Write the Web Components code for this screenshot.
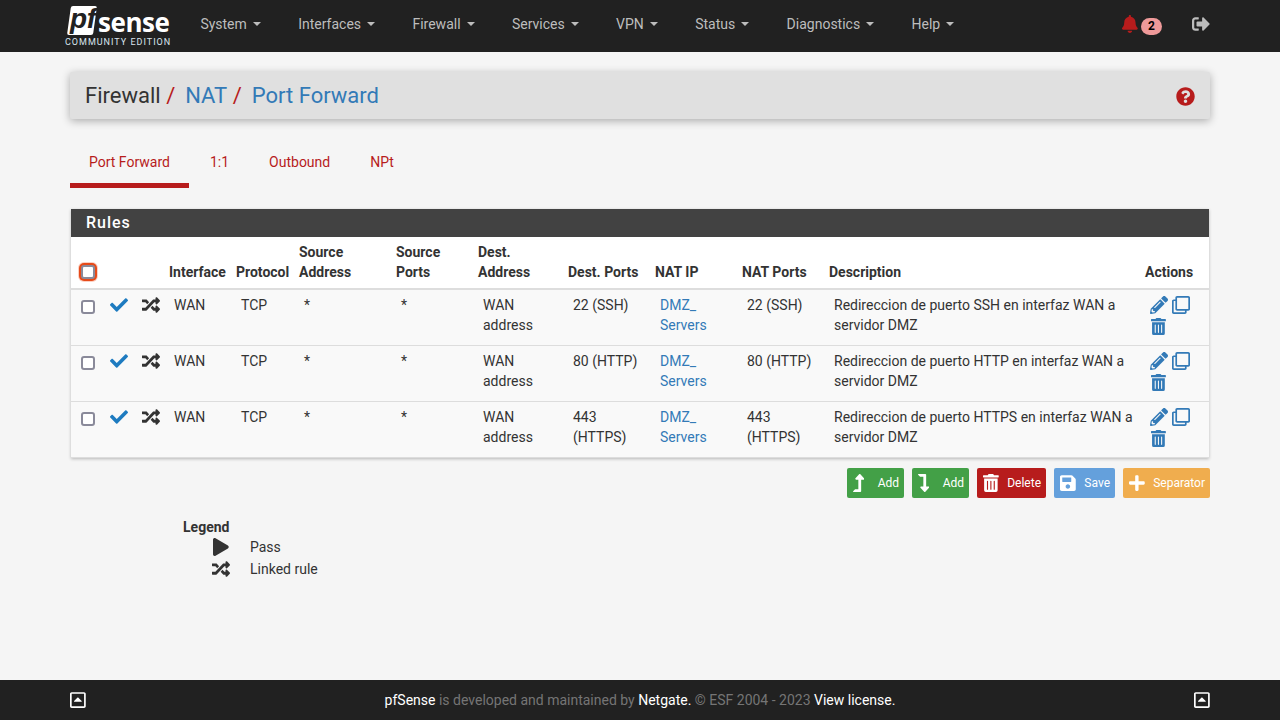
<!DOCTYPE html>
<html>
<head>
<meta charset="utf-8">
<title>Firewall / NAT / Port Forward</title>
<style>
html, body { margin: 0; height: 100%; }
body { background: #f5f5f5; font: 14px/20px Roboto, "Liberation Sans", sans-serif; color: #333; }
#page { height: 720px; display: flex; flex-direction: column; overflow: hidden; }
pf-main { flex: 1; }
</style>
</head>
<body>
<div id="page">
  <pf-navbar></pf-navbar>
  <pf-main>
    <pf-breadcrumb></pf-breadcrumb>
    <pf-tabs></pf-tabs>
    <pf-rules>
      <pf-rule desc="Redireccion de puerto SSH en interfaz WAN a servidor DMZ" port="22 (SSH)"></pf-rule>
      <pf-rule desc="Redireccion de puerto HTTP en interfaz WAN a servidor DMZ" port="80 (HTTP)"></pf-rule>
      <pf-rule desc="Redireccion de puerto HTTPS en interfaz WAN a servidor DMZ" port="443 (HTTPS)"></pf-rule>
    </pf-rules>
    <pf-actions></pf-actions>
    <pf-legend></pf-legend>
  </pf-main>
  <pf-footer></pf-footer>
</div>

<script>
// icon shapes, all on font-awesome style view boxes
const ICONS = {
  bell: [448, 'M224 512c35.32 0 63.97-28.65 63.97-64H160.03c0 35.35 28.65 64 63.97 64zm215.39-149.71c-19.32-20.76-55.47-51.99-55.47-154.29 0-77.7-54.48-139.9-127.94-155.16V32c0-17.67-14.32-32-31.98-32s-31.98 14.33-31.98 32v20.84C118.56 68.1 64.08 130.3 64.08 208c0 102.3-36.15 133.53-55.47 154.29-6 6.45-8.66 14.16-8.61 21.71.11 16.4 12.98 32 32.1 32h383.8c19.12 0 32-15.6 32.1-32 .05-7.55-2.61-15.27-8.61-21.71z'],
  signout: [512, 'M497 273L329 441c-15 15-41 4.5-41-17v-96H152c-13.3 0-24-10.7-24-24v-96c0-13.3 10.7-24 24-24h136V88c0-21.4 25.9-32 41-17l168 168c9.3 9.4 9.3 24.6 0 34zM192 436v-40c0-6.6-5.4-12-12-12H96c-17.7 0-32-14.3-32-32V160c0-17.7 14.3-32 32-32h84c6.6 0 12-5.4 12-12V76c0-6.6-5.4-12-12-12H96c-53 0-96 43-96 96v192c0 53 43 96 96 96h84c6.6 0 12-5.4 12-12z'],
  question: [512, 'M504 256c0 136.997-111.043 248-248 248S8 392.997 8 256C8 119.083 119.043 8 256 8s248 111.083 248 248zM262.655 90c-54.497 0-89.255 22.957-116.549 63.758-3.536 5.286-2.353 12.415 2.715 16.258l34.699 26.31c5.205 3.947 12.621 3.008 16.665-2.122 17.864-22.658 30.113-35.797 57.303-35.797 20.429 0 45.698 13.148 45.698 32.958 0 14.976-12.363 22.667-32.534 33.976C247.128 238.528 216 254.941 216 296v4c0 6.627 5.373 12 12 12h56c6.627 0 12-5.373 12-12v-1.333c0-28.462 83.186-29.647 83.186-106.667 0-58.002-60.165-102-116.531-102zM256 338c-25.365 0-46 20.635-46 46 0 25.364 20.635 46 46 46s46-20.636 46-46c0-25.365-20.635-46-46-46z'],
  check: [512, 'M173.898 439.404l-166.4-166.4c-9.997-9.997-9.997-26.206 0-36.204l36.203-36.204c9.997-9.998 26.207-9.998 36.204 0L192 312.69 432.095 72.596c9.997-9.997 26.207-9.997 36.204 0l36.203 36.204c9.997 9.997 9.997 26.206 0 36.204l-294.4 294.401c-9.998 9.997-26.207 9.997-36.204-.001z'],
  random: [512, 'M504.971 359.029c9.373 9.373 9.373 24.569 0 33.941l-80 79.984c-15.01 15.01-40.971 4.49-40.971-16.971V416h-58.785a12.004 12.004 0 0 1-8.773-3.812l-70.556-75.596 53.333-57.143L352 336h32v-39.981c0-21.438 25.943-31.998 40.971-16.971l80 79.981zM12 176h84l52.781 56.551 53.333-57.143-70.556-75.596A11.999 11.999 0 0 0 122.785 96H12c-6.627 0-12 5.373-12 12v56c0 6.627 5.373 12 12 12zm372 0v39.984c0 21.46 25.961 31.98 40.971 16.971l80-79.984c9.373-9.373 9.373-24.569 0-33.941l-80-79.981C409.943 24.021 384 34.582 384 56.019V96h-58.785a12.004 12.004 0 0 0-8.773 3.812L96 336H12c-6.627 0-12 5.373-12 12v56c0 6.627 5.373 12 12 12h110.785c3.326 0 6.503-1.381 8.773-3.812L352 176h32z'],
  pencil: [512, 'M497.9 142.1l-46.1 46.1c-4.7 4.7-12.3 4.7-17 0l-111-111c-4.7-4.7-4.7-12.3 0-17l46.1-46.1c18.7-18.7 49.1-18.7 67.9 0l60.1 60.1c18.8 18.7 18.8 49.1 0 67.9zM284.2 99.8L21.6 362.4.4 483.9c-2.9 16.4 11.4 30.6 27.8 27.8l121.5-21.3 262.6-262.6c4.7-4.7 4.7-12.3 0-17l-111-111c-4.8-4.7-12.4-4.7-17.1 0zM124.1 339.9c-5.5-5.5-5.5-14.3 0-19.8l154-154c5.5-5.5 14.3-5.5 19.8 0s5.5 14.3 0 19.8l-154 154c-5.5 5.5-14.3 5.5-19.8 0zM88 424h48v36.3l-64.5 11.3-31.1-31.1L51.7 376H88v48z'],
  clone: [512, 'M464 0H144c-26.51 0-48 21.49-48 48v48H48c-26.51 0-48 21.49-48 48v320c0 26.51 21.49 48 48 48h320c26.51 0 48-21.49 48-48v-48h48c26.51 0 48-21.49 48-48V48c0-26.51-21.49-48-48-48zM362 464H54a6 6 0 0 1-6-6V150a6 6 0 0 1 6-6h42v224c0 26.51 21.49 48 48 48h224v42a6 6 0 0 1-6 6zm96-96H150a6 6 0 0 1-6-6V54a6 6 0 0 1 6-6h308a6 6 0 0 1 6 6v308a6 6 0 0 1-6 6z'],
  trash: [448, 'M32 464a48 48 0 0 0 48 48h288a48 48 0 0 0 48-48V128H32zm272-256a16 16 0 0 1 32 0v224a16 16 0 0 1-32 0zm-96 0a16 16 0 0 1 32 0v224a16 16 0 0 1-32 0zm-96 0a16 16 0 0 1 32 0v224a16 16 0 0 1-32 0zM432 32H312l-9.4-18.7A24 24 0 0 0 281.1 0H166.8a23.72 23.72 0 0 0-21.4 13.3L136 32H16A16 16 0 0 0 0 48v32a16 16 0 0 0 16 16h416a16 16 0 0 0 16-16V48a16 16 0 0 0-16-16z'],
  save: [448, 'M433.941 129.941l-83.882-83.882A48 48 0 0 0 316.118 32H48C21.49 32 0 53.49 0 80v352c0 26.51 21.49 48 48 48h352c26.51 0 48-21.49 48-48V163.882a48 48 0 0 0-14.059-33.941zM224 416c-35.346 0-64-28.654-64-64 0-35.346 28.654-64 64-64s64 28.654 64 64c0 35.346-28.654 64-64 64zm96-304.52V212c0 6.627-5.373 12-12 12H76c-6.627 0-12-5.373-12-12V108c0-6.627 5.373-12 12-12h228.52c3.183 0 6.235 1.264 8.485 3.515l3.48 3.48A11.996 11.996 0 0 1 320 111.48z'],
  plus: [448, 'M416 208H272V64c0-17.67-14.33-32-32-32h-32c-17.67 0-32 14.33-32 32v144H32c-17.67 0-32 14.33-32 32v32c0 17.67 14.33 32 32 32h144v144c0 17.67 14.33 32 32 32h32c17.67 0 32-14.33 32-32V304h144c17.67 0 32-14.33 32-32v-32c0-17.67-14.33-32-32-32z'],
  up: [320, 'M313.553 119.669L209.587 7.666c-9.485-10.214-25.676-10.229-35.174 0L70.438 119.669C56.232 134.969 67.062 160 88.025 160H152v272H68.024a11.996 11.996 0 0 0-8.485 3.515l-56 56C-4.021 499.074 1.333 512 12.024 512H208c13.255 0 24-10.745 24-24V160h63.966c20.878 0 31.851-24.969 17.587-40.331z'],
  down: [320, 'M313.553 392.331L209.587 504.334c-9.485 10.214-25.676 10.229-35.174 0L70.438 392.331C56.232 377.031 67.062 352 88.025 352H152V80H68.024a11.996 11.996 0 0 1-8.485-3.515l-56-56C-4.021 12.926 1.333 0 12.024 0H208c13.255 0 24 10.745 24 24v328h63.966c20.878 0 31.851 24.969 17.587 40.331z'],
  play: [448, 'M424.4 214.7L72.4 6.6C43.8-10.3 0 6.1 0 47.9V464c0 37.5 40.7 60.1 72.4 41.3l352-208c31.4-18.5 31.5-64.1 0-82.6z'],
  caretup: [448, 'M322.9 304H125.1c-10.7 0-16-13-8.5-20.5l98.9-98.3c4.7-4.7 12.2-4.7 16.9 0l98.9 98.3c7.6 7.5 2.2 20.5-8.4 20.5zM448 80v352c0 26.5-21.5 48-48 48H48c-26.5 0-48-21.5-48-48V80c0-26.5 21.5-48 48-48h352c26.5 0 48 21.5 48 48zm-48 346V86c0-3.3-2.7-6-6-6H54c-3.3 0-6 2.7-6 6v340c0 3.3 2.7 6 6 6h340c3.3 0 6-2.7 6-6z']
};

// height in px, width follows the view box
function icon(name, size, color) {
  const [w, d] = ICONS[name];
  const width = size * w / 512;
  return `<svg width="${width}" height="${size}" viewBox="0 0 ${w} 512" fill="${color || 'currentColor'}" style="display:block;flex:none"><path d="${d}"/></svg>`;
}

class PfNavbar extends HTMLElement {
  connectedCallback() {
    const menus = ['System', 'Interfaces', 'Firewall', 'Services', 'VPN', 'Status', 'Diagnostics', 'Help'];
    const root = this.attachShadow({ mode: 'open' });
    root.innerHTML = `
      <style>
        :host { display: flex; height: 52px; background: #212121; padding: 0 70px 0 67px; box-sizing: border-box; align-items: stretch; flex: none; }
        .logo { width: 114.7px; position: relative; flex: none; color: #fff; }
        .mark { position: absolute; left: 1.5px; top: 6px; width: 26px; height: 29px; background: #fff; border-radius: 2px; transform: skewX(-8deg); }
        .pf { position: absolute; left: 3px; top: 6px; font: italic 700 28px/26px "Liberation Sans", sans-serif; letter-spacing: -.3px; color: #212121; }
        .sense { position: absolute; left: 31px; top: 9px; font: 700 26px/26px "Open Sans", sans-serif; letter-spacing: -.45px; }
        .ed { position: absolute; left: -2px; top: 36px; font: 400 9px/12px Roboto, sans-serif; letter-spacing: 1px; color: #d9e4ee; white-space: nowrap; }
        ul { display: flex; list-style: none; margin: 0; padding: 0; flex: 1; }
        li { padding: 0 18.7px 4px; color: #bdbdbd; display: flex; align-items: center; font-size: 14px; }
        .caret { width: 0; height: 0; border: 4px solid transparent; border-top-color: #bdbdbd; border-bottom: 0; margin-left: 6px; }
        .right { display: flex; align-items: center; color: #bdbdbd; padding-bottom: 4px; }
        .badge { background: #ef9a9a; color: #000; font-size: 12px; line-height: 17px; font-weight: 700; width: 21px; height: 17px; border-radius: 9px; text-align: center; margin: 4px 30px 0 3px; }
      </style>
      <div class="logo"><div class="mark"></div><span class="pf">pf</span><span class="sense">sense</span><span class="ed">COMMUNITY EDITION</span></div>
      <ul>${menus.map(m => `<li>${m}<span class="caret"></span></li>`).join('')}</ul>
      <div class="right">${icon('bell', 18, '#b71c1c')}<span class="badge">2</span>${icon('signout', 18)}</div>`;
  }
}
customElements.define('pf-navbar', PfNavbar);

class PfMain extends HTMLElement {
  constructor() {
    super();
    this.attachShadow({ mode: 'open' }).innerHTML = `
      <style>:host { display: block; padding: 20px 70px 0; }</style>
      <slot></slot>`;
  }
}
customElements.define('pf-main', PfMain);

class PfBreadcrumb extends HTMLElement {
  constructor() {
    super();
    this.attachShadow({ mode: 'open' }).innerHTML = `
      <style>
        :host { display: flex; align-items: center; height: 47px; background: #e0e0e0; border-radius: 2px; box-shadow: 0 2px 8px rgba(0,0,0,.3); padding: 0 15px; font-size: 22px; }
        .s { color: #b71c1c; margin: 0 10px 0 5.5px; }
        a { color: #337ab7; }
        .q { margin: 1px 0 0 auto; }
      </style>
      <span>Firewall</span><span class="s">/</span><a>NAT</a><span class="s">/</span><a>Port Forward</a>
      <span class="q">${icon('question', 19, '#b71c1c')}</span>`;
  }
}
customElements.define('pf-breadcrumb', PfBreadcrumb);

class PfTabs extends HTMLElement {
  constructor() {
    super();
    const tabs = ['Port Forward', '1:1', 'Outbound', 'NPt'];
    this.attachShadow({ mode: 'open' }).innerHTML = `
      <style>
        :host { display: flex; gap: 2px; margin-top: 20px; height: 49px; margin-bottom: 21px; }
        a { padding: 13px 19px 0; height: 31px; color: #b71c1c; border-bottom: 5px solid transparent; }
        a.on { border-bottom-color: #b71c1c; }
      </style>
      ${tabs.map((t, i) => `<a class="${i ? '' : 'on'}">${t}</a>`).join('')}`;
  }
}
customElements.define('pf-tabs', PfTabs);

// grid columns are shared by the header and the rows
const COLS = '34px 32px 32px 67px 63px 97px 82px 90px 87px 87px 87px 316px 1fr';

class PfRules extends HTMLElement {
  constructor() {
    super();
    const heads = [
      'Interface', 'Protocol', 'Source<br>Address', 'Source<br>Ports',
      'Dest.<br>Address', 'Dest. Ports', 'NAT IP', 'NAT Ports', 'Description', 'Actions'
    ];
    this.attachShadow({ mode: 'open' }).innerHTML = `
      <style>
        :host { display: block; margin: 0 1px; background: #fff; box-shadow: 0 1px 3px rgba(0,0,0,.25); }
        h2 { margin: 0; height: 28px; background: #424242; color: #fff; font-size: 16px; line-height: 28px; font-weight: 500; letter-spacing: 1px; padding-left: 15px; }
        .head { display: grid; grid-template-columns: ${COLS}; height: 45px; padding-bottom: 6px; border-bottom: 2px solid #ddd; font-weight: 700; align-items: end; }
        .box { width: 14px; height: 14px; border: 2px solid #8a8a9a; border-radius: 3px; background: #fff; box-sizing: border-box; margin: 0 0 3px 10px; box-shadow: 0 0 0 2px #e64a19, 0 0 0 3px #fbd0c3; }
      </style>
      <h2>Rules</h2>
      <div class="head">
        <div><div class="box"></div></div><div></div><div></div>
        ${heads.map(h => `<div>${h}</div>`).join('')}
      </div>
      <slot></slot>`;
  }
}
customElements.define('pf-rules', PfRules);

class PfRule extends HTMLElement {
  connectedCallback() {
    const port = this.getAttribute('port');
    this.attachShadow({ mode: 'open' }).innerHTML = `
      <style>
        :host { display: grid; grid-template-columns: ${COLS}; height: 50px; background: #f9f9f9; border-bottom: 1px solid #ddd; padding-top: 5px; }
        div { padding: 0 5px; }
        .box { width: 14px; height: 14px; border: 2px solid #8a8a9a; border-radius: 3px; background: #fff; box-sizing: border-box; margin: 5px 0 0 10px; padding: 0; }
        .i { padding-top: 1px; }
        a { color: #337ab7; }
        .act { padding: 1px 0 0 5px; color: #337ab7; display: flex; flex-wrap: wrap; gap: 4px; width: 48px; align-content: flex-start; }
        .act svg:last-child { margin-left: 1px; }
      </style>
      <div style="padding:0"><div class="box"></div></div>
      <div class="i" style="color:#1e7bc0">${icon('check', 18)}</div>
      <div class="i">${icon('random', 18)}</div>
      <div>WAN</div><div>TCP</div><div>*</div><div>*</div>
      <div>WAN address</div><div>${port}</div>
      <div><a>DMZ_<br>Servers</a></div>
      <div>${port}</div>
      <div>${this.getAttribute('desc')}</div>
      <div class="act">${icon('pencil', 18)}${icon('clone', 18)}${icon('trash', 17)}</div>`;
  }
}
customElements.define('pf-rule', PfRule);

class PfActions extends HTMLElement {
  constructor() {
    super();
    const btns = [
      ['up', 'Add', '#43a047'], ['down', 'Add', '#43a047'], ['trash', 'Delete', '#b71c1c'],
      ['save', 'Save', '#64a0dc'], ['plus', 'Separator', '#f0ad4e']
    ];
    this.attachShadow({ mode: 'open' }).innerHTML = `
      <style>
        :host { display: flex; justify-content: flex-end; gap: 8px; margin-top: 10px; }
        a { display: flex; align-items: center; justify-content: space-between; height: 30px; padding: 0 5px 0 6px; color: #fff; font-size: 12px; border-radius: 2px; gap: 8px; }
        a.up, a.down { width: 46px; } a.trash { width: 58px; } a.save { width: 50px; } a.plus { width: 76px; }
      </style>
      ${btns.map(([i, t, c]) => `<a class="${i}" style="background:${c}">${icon(i, 18)}<span>${t}</span></a>`).join('')}`;
  }
}
customElements.define('pf-actions', PfActions);

class PfLegend extends HTMLElement {
  constructor() {
    super();
    this.attachShadow({ mode: 'open' }).innerHTML = `
      <style>
        :host { display: grid; grid-template-columns: 66px 1fr; margin: 20px 0 0 113px; line-height: 22px; }
        b { grid-column: 1 / 3; line-height: 18px; }
        span { display: flex; align-items: center; justify-content: center; width: 76px; }
        div { padding-left: 1px; }
      </style>
      <b>Legend</b>
      <span>${icon('play', 18)}</span><div>Pass</div>
      <span>${icon('random', 18)}</span><div>Linked rule</div>`;
  }
}
customElements.define('pf-legend', PfLegend);

class PfFooter extends HTMLElement {
  constructor() {
    super();
    this.attachShadow({ mode: 'open' }).innerHTML = `
      <style>
        :host { display: flex; align-items: center; justify-content: space-between; height: 40px; background: #212121; color: #757575; padding: 0 70px; flex: none; }
        b { font-weight: 400; color: #fff; }
        i { color: #fff; }
      </style>
      <i>${icon('caretup', 18)}</i>
      <span><b>pfSense</b> is developed and maintained by <b>Netgate.</b> © ESF 2004 - 2023 <b>View license.</b></span>
      <i>${icon('caretup', 18)}</i>`;
  }
}
customElements.define('pf-footer', PfFooter);
</script>
</body>
</html>
